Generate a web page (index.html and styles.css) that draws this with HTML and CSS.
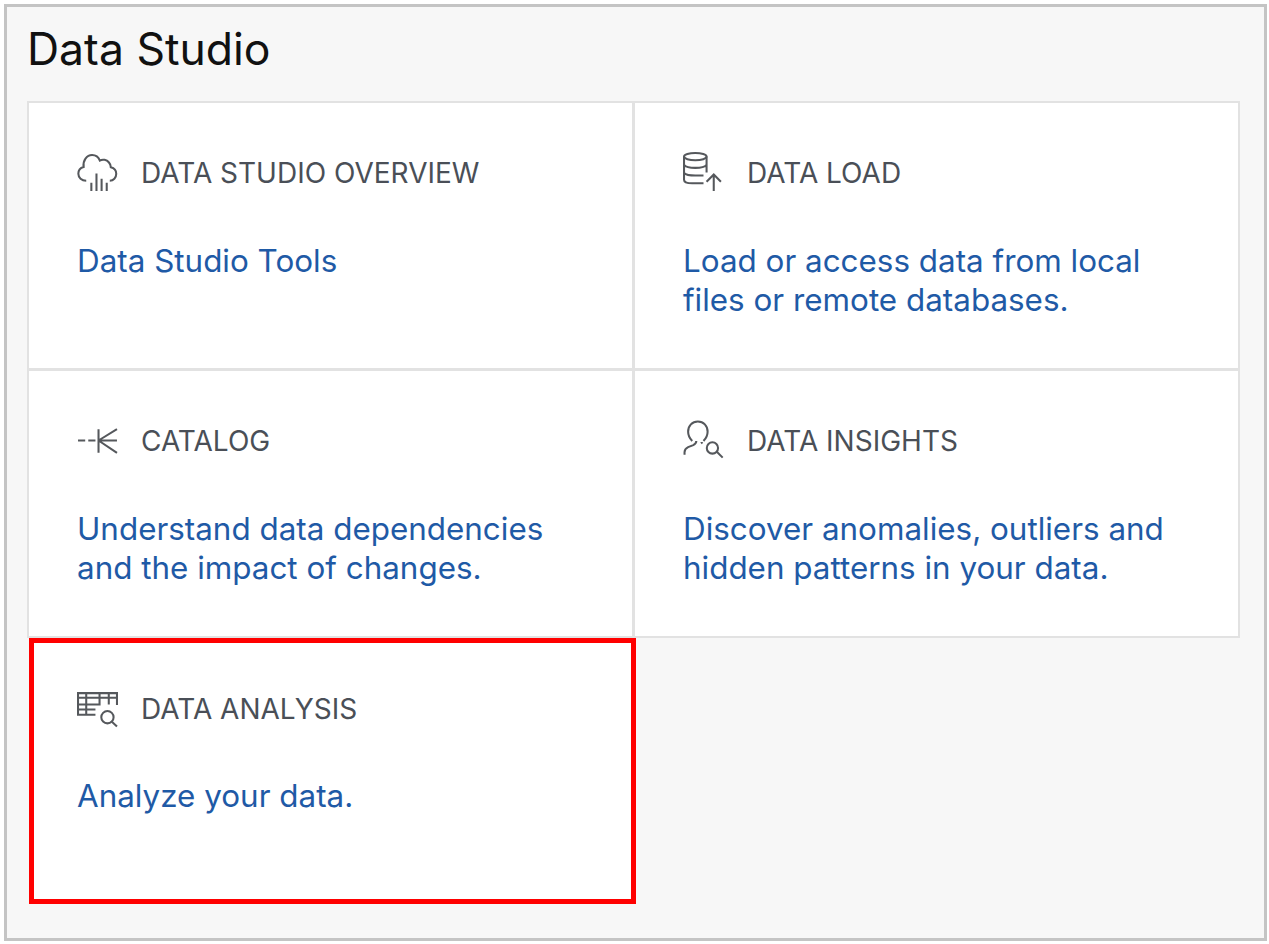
FILE: index.html
```html
<!DOCTYPE html>
<html lang="en">
<head>
<meta charset="UTF-8">
<meta name="viewport" content="width=device-width, initial-scale=1.0">
<title>Data Studio</title>
<link rel="stylesheet" href="styles.css">
</head>
<body>
<div class="panel">
    <h1>Data Studio</h1>
    <div class="cards">
        <div class="card">
            <div class="card-head">
                <svg class="icon" viewBox="0 0 40 40"><path d="M9 28C4.500 28 1.300 25 1.300 21.300C1.300 18 3.500 15.500 6.500 14.700C5.500 8.500 9.500 3 14.700 3C18 3 21 5 22.300 8.300C25 6.800 29 7.500 31 10C32.500 11.700 33 13 33 14.800C36 15.500 38.300 18 38.300 21.300C38.300 25 35.500 28 32 28"/><path d="M14 30v8M19 21v17M24 26v12M29 30v8"/></svg>
                <span class="card-title">DATA STUDIO OVERVIEW</span>
            </div>
            <a class="card-link" href="#">Data Studio Tools</a>
        </div>
        <div class="card">
            <div class="card-head">
                <svg class="icon" viewBox="0 0 40 40"><ellipse cx="12" cy="4.500" rx="11" ry="3.500"/><path d="M1 4.500V27C1 29.500 4 30.500 9 30.500H20M23 4.500V20M1 12.500C3 15 7 15.500 12 15.500S21 15 23 12.500M1 20.500C3 22.500 7 23 12 23H20"/><path d="M30 38V22M23 29L30 22L37 29"/></svg>
                <span class="card-title">DATA LOAD</span>
            </div>
            <a class="card-link" href="#">Load or access data from local<br>files or remote databases.</a>
        </div>
        <div class="card">
            <div class="card-head">
                <svg class="icon" viewBox="0 0 40 40"><path d="M1 20H8M11 20H18"/><path d="M21 9V32M21 20H39M21 20L39 9M21 20L39 32"/></svg>
                <span class="card-title">CATALOG</span>
            </div>
            <a class="card-link" href="#">Understand data dependencies<br>and the impact of changes.</a>
        </div>
        <div class="card">
            <div class="card-head">
                <svg class="icon" viewBox="0 0 40 40"><path d="M9 20.500C6.500 18 5 15 5 11.500C5 5.500 9 1.500 14.500 1.500C20 1.500 24 5.500 24 11.500C24 15 22.500 18 20 20.500"/><path d="M1.500 34V31.500C1.500 29 3 27.500 5 26.500L10 24.500C12 23.500 13 22 13 20.500M18 21.500C18 22 18.500 22.500 19 23"/><circle cx="28.700" cy="27.300" r="5.500"/><path d="M33 31L38.700 36.700"/></svg>
                <span class="card-title">DATA INSIGHTS</span>
            </div>
            <a class="card-link" href="#">Discover anomalies, outliers and<br>hidden patterns in your data.</a>
        </div>
        <div class="card card-selected">
            <div class="card-head">
                <svg class="icon" viewBox="0 0 40 40"><path d="M18 26H1V5H39V16.500M1 9.500H39M1 16H23M1 21H18M9 5V26M22 5V16M31 5V16"/><circle cx="29.700" cy="28.500" r="6"/><path d="M34 33L39 37.500"/></svg>
                <span class="card-title">DATA ANALYSIS</span>
            </div>
            <a class="card-link" href="#">Analyze your data.</a>
        </div>
    </div>
</div>
</body>
</html>
```

FILE: styles.css
```css
body {
    font-family: Inter, "Noto Sans", sans-serif;
    margin: 0;
    padding: 4px 2px 3px 4px;
    background-color: #fff;
    height: 944px;
    box-sizing: border-box;
    overflow: hidden;
}
.panel {
    height: 937px;
    box-sizing: border-box;
    background-color: #f7f7f7;
    border: 3px solid #c4c4c4;
    padding: 0 23px 0 20px;
}
h1 {
    margin: 0;
    height: 94px;
    padding-top: 16px;
    box-sizing: border-box;
    font-size: 44.5px;
    line-height: 52px;
    font-weight: 400;
    color: #111;
}
.cards {
    display: grid;
    grid-template-columns: 606px 606px;
    grid-auto-rows: 268px;
    width: 1212px;
}
.card {
    background-color: #fff;
    border: 2px solid #e2e2e2;
    box-sizing: border-box;
    margin-right: -1px;
    margin-bottom: -1px;
    padding: 47px 48px 0 48px;
}
.card-selected {
    border: 5px solid #ff0000;
    margin: 1px -3px 1px 2px;
    padding: 43px 44px 0 43px;
}
.card-head {
    display: flex;
    align-items: center;
    gap: 23px;
    height: 44px;
}
.icon {
    width: 41px;
    height: 41px;
    flex: none;
    fill: none;
    stroke: #55585c;
    stroke-width: 2;
}
.card-title {
    padding-top: 2px;
    font-size: 28px;
    color: #4a4f57;
}
.card-link {
    display: block;
    margin-top: 48px;
    font-size: 31.4px;
    line-height: 39px;
    color: #1f5aa6;
    text-decoration: none;
}
.card-selected .card-link {
    margin-top: 47px;
}
```
